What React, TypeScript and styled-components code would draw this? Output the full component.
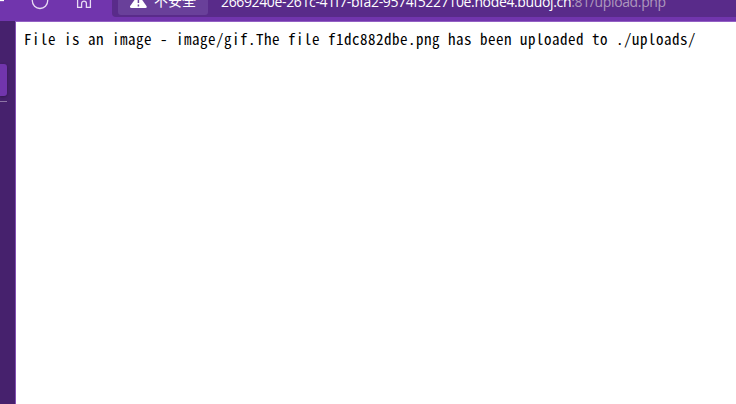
import React from 'react';
import styled, { createGlobalStyle } from 'styled-components';

const GlobalStyle = createGlobalStyle`
  * { box-sizing: border-box; }
  html, body { margin: 0; overflow: hidden; background: #fff; }
`;

const Browser = styled.div`
  width: 736px;
  height: 404px;
  display: flex;
  flex-direction: column;
  overflow: hidden;
`;

const Toolbar = styled.header`
  height: 21px;
  flex: none;
  display: flex;
  align-items: flex-start;
  background: #7135ad;
  overflow: hidden;
`;

const NavIcons = styled.svg`
  width: 112px;
  height: 21px;
  flex: none;
  fill: none;
  stroke: #e8dcf3;
  stroke-width: 1.3;
`;

const AddressBar = styled.div`
  width: 640px;
  height: 17px;
  flex: none;
  display: flex;
  padding-left: 6px;
  background: #592b8a;
  border-radius: 0 0 0 4px;
`;

const SecurityBadge = styled.div`
  width: 90px;
  height: 15px;
  flex: none;
  display: flex;
  padding-left: 12px;
  background: #69409a;
  border-radius: 0 0 3px 3px;
`;

const WarningIcon = styled.svg`
  width: 17px;
  height: 9px;
  margin-right: 7px;
  flex: none;
`;

const BadgeLabel = styled.span`
  margin-top: -10px;
  font: 14px/20px "Noto Sans CJK SC", sans-serif;
  color: #fff;
  white-space: nowrap;
`;

const Url = styled.span`
  margin: -8px 0 0 13px;
  font: 14px/20px "Open Sans", sans-serif;
  letter-spacing: -0.36px;
  color: #fff;
  white-space: nowrap;
`;

const UrlPath = styled.span`
  color: #ad98bd;
`;

const Body = styled.div`
  flex: 1;
  display: flex;
  min-height: 0;
`;

const Sidebar = styled.aside`
  width: 15px;
  flex: none;
  padding-top: 43px;
  background: #46216d;
`;

const ActiveTab = styled.div`
  width: 7px;
  height: 32px;
  background: #7135ad;
  border-radius: 0 3px 3px 0;
  box-shadow: 0 1px 3px #331650;
`;

const Divider = styled.div`
  width: 7px;
  height: 1px;
  margin-top: 5px;
  background: #8d75a5;
`;

const Page = styled.main`
  flex: 1;
  padding: 7px 0 0 8px;
  border-top: 1px solid #9360c4;
  border-left: 1px solid #8250b3;
  background: #fff;
`;

const Message = styled.div`
  font: 15px/20px "Noto Sans Mono CJK SC", "Noto Sans CJK SC", monospace;
  font-feature-settings: "hwid" 1, "kern" 0;
  letter-spacing: 0.5px;
  color: #000;
  white-space: nowrap;
`;

export default function App() {
  return (
    <Browser>
      <GlobalStyle />
      <Toolbar>
        <NavIcons viewBox="0 0 112 21">
          <path d="M0 .5h4" stroke="#fff" />
          <path d="M32.3 0.8a7.7 7.7 0 0 0 15.4 0V0M32.3 0.8V0" />
          <path d="M77.6-2V7.3h4V3.5a2.4 2.4 0 0 1 4.8 0v3.8h4V-2" />
        </NavIcons>
        <AddressBar>
          <SecurityBadge>
            <WarningIcon viewBox="0 0 17 9">
              <path d="M5.2-1 0 6.2Q-.3 8 1.5 8h14Q17.2 8 16.6 6.2L11.5-1Z" fill="#fff" />
              <path d="M8.4-1v4M8.4 4.6v1.8" stroke="#69409a" strokeWidth="1.5" />
            </WarningIcon>
            <BadgeLabel>不安全</BadgeLabel>
          </SecurityBadge>
          <Url>
            2669240e-261c-41f7-bfa2-9574f522710e.node4.buuoj.cn<UrlPath>:81/upload.php</UrlPath>
          </Url>
        </AddressBar>
      </Toolbar>
      <Body>
        <Sidebar>
          <ActiveTab />
          <Divider />
        </Sidebar>
        <Page>
          <Message>
            File is an image - image/gif.The file f1dc882dbe.png has been uploaded to ./uploads/
          </Message>
        </Page>
      </Body>
    </Browser>
  );
}
